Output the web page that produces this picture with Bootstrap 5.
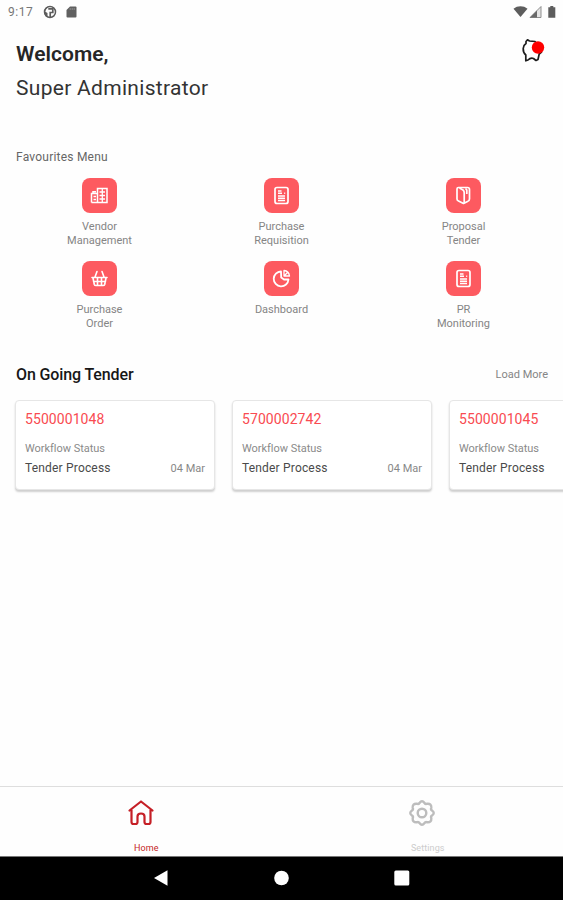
<!DOCTYPE html>
<html lang="en">
<head>
<meta charset="utf-8">
<meta name="viewport" content="width=device-width, initial-scale=1">
<title>Home</title>
<link href="https://cdn.jsdelivr.net/npm/bootstrap@5.3.0/dist/css/bootstrap.min.css" rel="stylesheet">
<style>
body{font-family:Roboto,"Liberation Sans",sans-serif;background:#fefefe;color:#262626}
svg{display:block;flex:none}
.phone{height:900px}
.status-bar{height:24px;padding:0 6px 0 8px;color:#656565}
.clock{font-size:12px;line-height:24px;letter-spacing:.5px;color:#777;width:35px}
.greeting{height:126px;padding:15px 18px 0 16px}
.hello{font-size:21px;line-height:30px;font-weight:600;letter-spacing:.05px}
.who{font-size:21px;line-height:30px;letter-spacing:.3px;margin-top:4px;color:#333}
.bell{margin-top:-1px}
.fav-title{font-size:12px;line-height:14px;letter-spacing:.22px;color:#666;padding-left:16px}
.menu{padding:14px 9px 0 8px}
.menu-item{height:82.7px}
.tile{width:35px;height:35px;border-radius:8px;background:#fd5a60}
.caption{font-size:11px;line-height:14px;letter-spacing:0;color:#858585;margin-top:7px;padding-left:1px}
.heading{height:24px;margin-top:19px;padding:0 15px 0 16px}
.heading h2{font-size:16px;font-weight:500;letter-spacing:-.12px;color:#171717}
.more{font-size:11px;letter-spacing:0;color:#858585;padding-top:1px}
.tenders{gap:17px;padding:14px 0 10px 15px}
.tender{width:200px;height:90px;flex:none;border:1px solid #e6e6e6;border-radius:4px;background:#fff;box-shadow:0 2px 2px #00000030;padding:9px 9px 0 9px}
.number{font-size:14px;line-height:18px;color:#f94b51;letter-spacing:.07px}
.wf{font-size:11px;line-height:14px;color:#8a8a8a;margin-top:14px;letter-spacing:-.03px}
.state{font-size:12px;line-height:16px;color:#4a4a4a;letter-spacing:.18px}
.date{font-size:11px;color:#888;line-height:16px;padding-top:1px}
.tabs{height:70px;border-top:1px solid #dedede}
.tab{padding-top:12px}
.tab-name{font-size:9px;line-height:10px;margin-top:16px;padding-left:11px;letter-spacing:.1px}
.home{color:#c51f26}
.settings{color:#bdbdbd}
.settings .tab-name{color:#ccc}
.system{height:44px;background:#000;border-top:1px solid #777;padding-bottom:2px}
.system svg{width:120.5px}
</style>
</head>
<body>
<div class="phone d-flex flex-column overflow-hidden">
  <div class="status-bar d-flex align-items-center">
    <span class="clock">9:17</span>
    <svg width="14" height="14" viewBox="0 0 14 14"><circle cx="7" cy="7" r="5.5" fill="#fefefe" stroke="#5c5c5c" stroke-width="1.5"/><path d="M7 1.500A5.500 5.500 0 0 0 4.500 12V8L2 6.500L3.500 3z" fill="#5c5c5c"/><path d="M5.300 3.800H9.800V7.500H7.200V12" fill="none" stroke="#5c5c5c" stroke-width="1.700"/></svg>
    <svg class="ms-2" width="13" height="14" viewBox="0 0 13 14"><path d="M5 1.5h5.5a1 1 0 0 1 1 1v9a1 1 0 0 1-1 1h-8a1 1 0 0 1-1-1V5z" fill="#606060"/><path d="M5.2 3v2M7.2 3v2M9.2 3v2" stroke="#999" stroke-width=".8"/></svg>
    <svg class="ms-auto" width="44" height="16" viewBox="0 0 44 16"><path d="M.5 4.800c4-3.300 10-3.300 14 0L7.500 13z" fill="#5d5d5d"/><path d="M17 13.5 28 2.5v11z" fill="#e4e4e4" stroke="#777" stroke-width=".8"/><path d="M17 13.5 24 6.5v7z" fill="#696969"/><path d="M35.300 3.200h2V2h3v1.200h2v10.600h-7z" fill="#5d5d5d"/></svg>
  </div>

  <div class="greeting d-flex justify-content-between align-items-start">
    <div>
      <div class="hello">Welcome,</div>
      <div class="who">Super Administrator</div>
    </div>
    <svg class="bell" width="24" height="26" viewBox="0 0 24 26"><path d="M5 3.500L6.500 1.800L8.500 3L14 3.500L18 8.500L18.200 13.500L20.500 14L18.200 16L17 21.500L15 22.500L12.500 20.500Q9.500 19.500 7 22L4.800 22.800L4.800 17Q2 14.500 2.200 10.500Q2.500 7 5 5.500z" fill="#fff" stroke="#1c1c1c" stroke-width="1.700" stroke-linejoin="round"/><circle cx="17" cy="9.500" r="6.200" fill="#fe0000"/></svg>
  </div>

  <div class="fav-title">Favourites Menu</div>
  <div class="menu row g-0 text-center">
    <div class="menu-item col-4 d-flex flex-column align-items-center">
      <div class="tile d-flex align-items-center justify-content-center"><svg width="19" height="19" viewBox="0 0 19 19" fill="none" stroke="#fff" stroke-width="1.500"><path d="M7.500 16.500V2.500h9.500V16.500zM1.500 16.500V7.500H7.500M1.500 16.500H8M3 7.500V5.800h3"/><path d="M12.300 3v13M9.500 6h5.500M9.500 9.500h5.500M9.500 13h5.500M3.500 10.500h2.500M3.500 13.500h2.500" stroke-width="1.300"/></svg></div>
      <div class="caption">Vendor<br>Management</div>
    </div>
    <div class="menu-item col-4 d-flex flex-column align-items-center">
      <div class="tile d-flex align-items-center justify-content-center"><svg width="19" height="19" viewBox="0 0 19 19" fill="none" stroke="#fff" stroke-width="1.700"><rect x="3" y="1.500" width="13" height="16" rx="2"/><path d="M6 5h3.500M6 7.300h4M6 10h7M6 12.200h7M6 14.500h7M12.200 7.300h1" stroke-width="1.400"/></svg></div>
      <div class="caption">Purchase<br>Requisition</div>
    </div>
    <div class="menu-item col-4 d-flex flex-column align-items-center">
      <div class="tile d-flex align-items-center justify-content-center"><svg width="19" height="19" viewBox="0 0 19 19" fill="none" stroke="#fff" stroke-width="1.700" stroke-linejoin="round"><path d="M3 3Q3 1.500 4.500 1.500H13.500Q15.500 1.500 15.500 3.500V13Q15.500 15 13.500 15.500L9.500 17.500L4.500 15Q3 14.500 3 13z"/><path d="M5.500 2L9 4Q10.200 5 10.200 6.500V17M11.500 2.500L12.800 4V8"/></svg></div>
      <div class="caption">Proposal<br>Tender</div>
    </div>
    <div class="menu-item col-4 d-flex flex-column align-items-center">
      <div class="tile d-flex align-items-center justify-content-center"><svg width="19" height="19" viewBox="0 0 19 19" fill="none" stroke="#fff" stroke-width="1.600" stroke-linejoin="round" stroke-linecap="round"><path d="M2 8.500h15M3 9L4.300 15.500Q4.600 16.500 6 16.500H13Q14.400 16.500 14.700 15.500L16 9M3.500 12.500h12M7.500 9v7M11.500 9v7M5 8L7 2.500M14 8L12 2.500"/></svg></div>
      <div class="caption">Purchase<br>Order</div>
    </div>
    <div class="menu-item col-4 d-flex flex-column align-items-center">
      <div class="tile d-flex align-items-center justify-content-center"><svg width="19" height="19" viewBox="0 0 19 19" fill="none" stroke="#fff" stroke-width="1.800" stroke-linejoin="round"><path d="M9 2.500A7.400 7.400 0 1 0 16.500 10.500H12L9.200 8.500z"/><path d="M12 7V1.500Q16.800 2 17.500 7zM12 7L16 3" stroke-width="1.300"/></svg></div>
      <div class="caption">Dashboard</div>
    </div>
    <div class="menu-item col-4 d-flex flex-column align-items-center">
      <div class="tile d-flex align-items-center justify-content-center"><svg width="19" height="19" viewBox="0 0 19 19" fill="none" stroke="#fff" stroke-width="1.700"><rect x="3" y="1.500" width="13" height="16" rx="2"/><path d="M6 5h3.500M6 7.300h4M6 10h7M6 12.200h7M6 14.500h7M12.200 7.300h1" stroke-width="1.400"/></svg></div>
      <div class="caption">PR<br>Monitoring</div>
    </div>
  </div>

  <div class="heading d-flex align-items-center justify-content-between">
    <h2 class="m-0">On Going Tender</h2>
    <span class="more">Load More</span>
  </div>
  <div class="tenders d-flex overflow-hidden">
    <div class="tender"><div class="number">5500001048</div><div class="wf">Workflow Status</div><div class="d-flex justify-content-between mt-1"><span class="state">Tender Process</span><span class="date">04 Mar</span></div></div>
    <div class="tender"><div class="number">5700002742</div><div class="wf">Workflow Status</div><div class="d-flex justify-content-between mt-1"><span class="state">Tender Process</span><span class="date">04 Mar</span></div></div>
    <div class="tender"><div class="number">5500001045</div><div class="wf">Workflow Status</div><div class="d-flex justify-content-between mt-1"><span class="state">Tender Process</span></div></div>
  </div>

  <div class="tabs d-flex mt-auto">
    <div class="tab home w-50 d-flex flex-column align-items-center">
      <svg width="28" height="28" viewBox="0 0 28 28" fill="none" stroke="currentColor" stroke-width="2.200" stroke-linejoin="round" stroke-linecap="round"><path d="M2.500 11.500L14 2.500L25.500 11.500M4.500 11V23Q4.500 25 6.500 25H8.500Q10.500 25 10.500 23V17.500Q10.500 14.500 14 14.500T17.500 17.500V23Q17.500 25 19.500 25H21.500Q23.500 25 23.500 23V11"/></svg>
      <span class="tab-name">Home</span>
    </div>
    <div class="tab settings w-50 d-flex flex-column align-items-center">
      <svg width="28" height="28" viewBox="0 0 28 28" fill="none" stroke="currentColor" stroke-width="2.400" stroke-linejoin="round"><path d="M11.500 4Q14 0.500 16.500 4Q17.500 5.500 19.300 4.700Q23.600 4.400 23.300 8.700Q22.500 10.500 24 11.500Q27.500 14 24 16.500Q22.500 17.500 23.300 19.300Q23.600 23.600 19.300 23.300Q17.500 22.500 16.500 24Q14 27.500 11.500 24Q10.500 22.500 8.700 23.300Q4.400 23.600 4.700 19.300Q5.500 17.500 4 16.500Q0.500 14 4 11.500Q5.500 10.500 4.700 8.700Q4.400 4.400 8.700 4.700Q10.500 5.500 11.500 4z"/><circle cx="14" cy="14" r="4.300"/></svg>
      <span class="tab-name">Settings</span>
    </div>
  </div>
  <div class="system d-flex align-items-center justify-content-center">
    <svg height="18" viewBox="0 0 120.5 18"><path d="M53 9 66.500 1.200v15.600z" fill="#fff"/></svg>
    <svg height="18" viewBox="0 0 120.5 18"><circle cx="60.500" cy="9" r="7.300" fill="#fff"/></svg>
    <svg height="18" viewBox="0 0 120.5 18"><rect x="52.300" y="1.500" width="15" height="15" rx="1.500" fill="#fff"/></svg>
  </div>
</div>
<script src="https://cdn.jsdelivr.net/npm/bootstrap@5.3.0/dist/js/bootstrap.bundle.min.js"></script>
</body>
</html>
